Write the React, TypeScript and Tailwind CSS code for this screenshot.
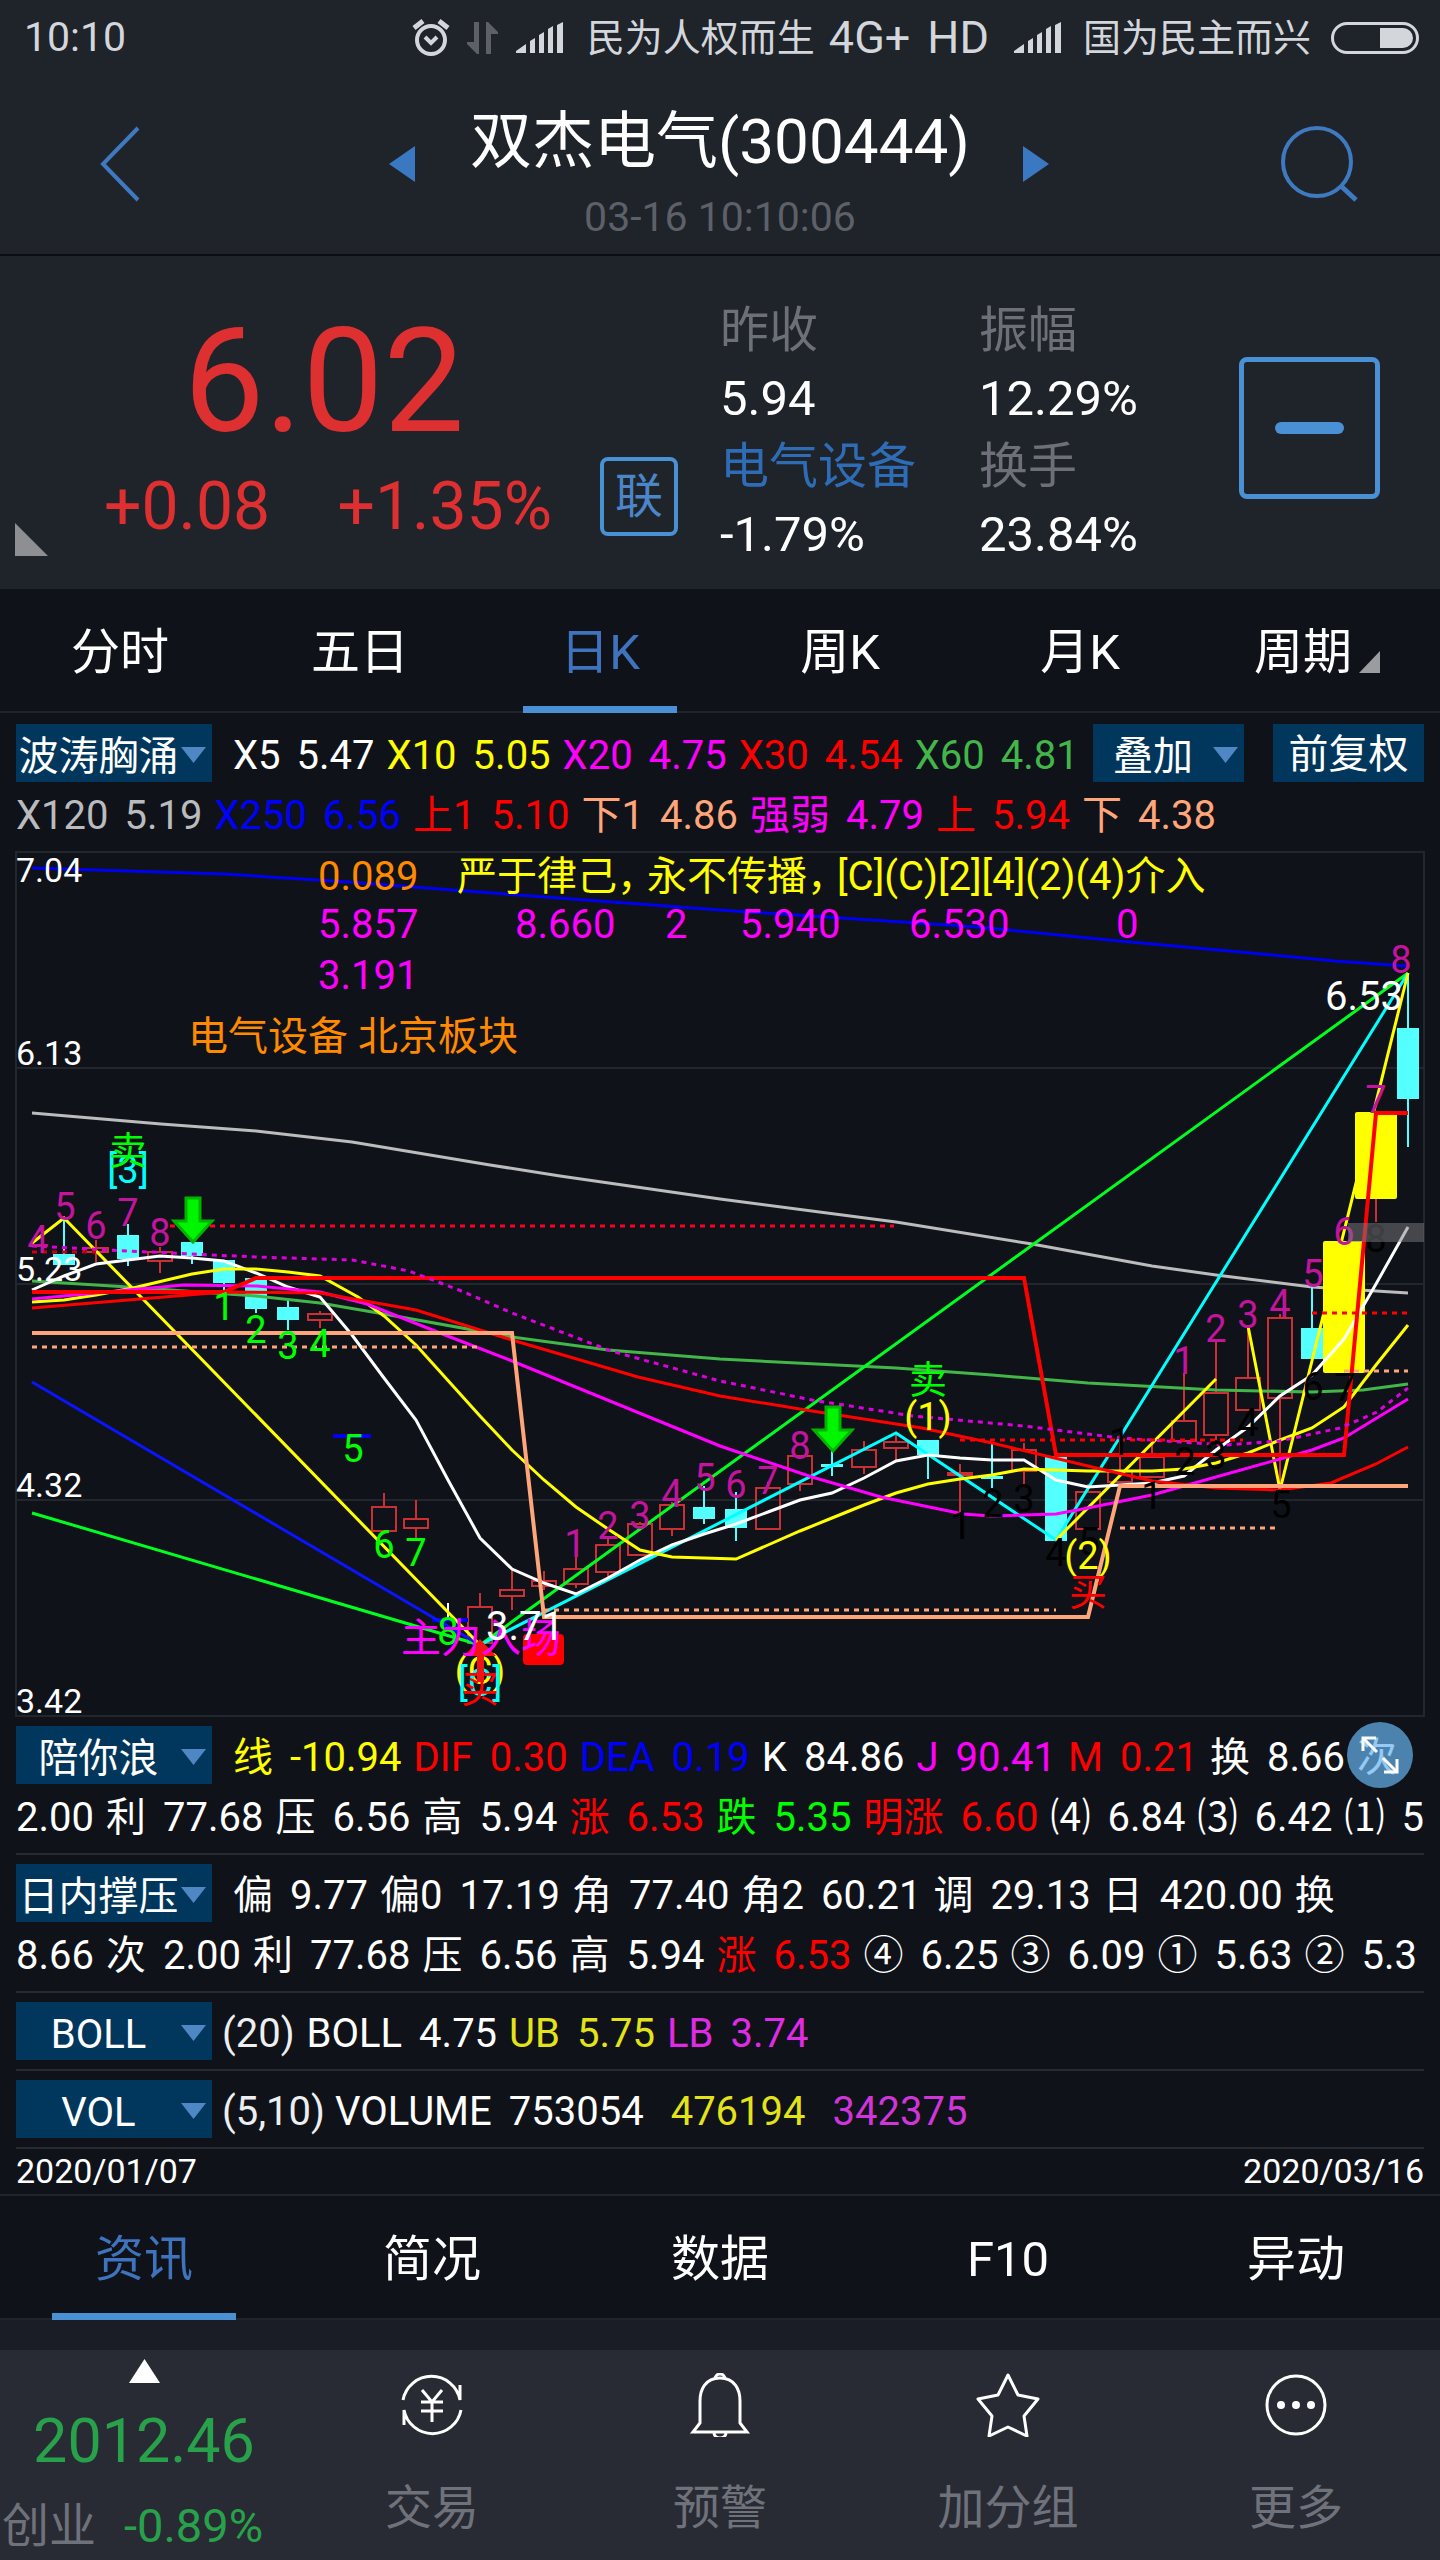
import type { ReactNode } from "react";

type Reading = { name?: string; value?: string; color?: string };
type Point = [number, number];

const periods = ["分时", "五日", "日K", "周K", "月K", "周期"];
const sections = ["资讯", "简况", "数据", "F10", "异动"];

const maTop: Reading[] = [
  { name: "X5", value: "5.47" },
  { name: "X10", value: "5.05", color: "text-[#ffff00]" },
  { name: "X20", value: "4.75", color: "text-[#ff00ff]" },
  { name: "X30", value: "4.54", color: "text-[#ff0000]" },
  { name: "X60", value: "4.81", color: "text-[#43b649]" },
];

const maBottom: Reading[] = [
  { name: "X120", value: "5.19", color: "text-[#b9bbbe]" },
  { name: "X250", value: "6.56", color: "text-[#0000ff]" },
  { name: "上1", value: "5.10", color: "text-[#ff0000]" },
  { name: "下1", value: "4.86", color: "text-[#ffa57a]" },
  { name: "强弱", value: "4.79", color: "text-[#ff00ff]" },
  { name: "上", value: "5.94", color: "text-[#ff0000]" },
  { name: "下", value: "4.38", color: "text-[#ffa57a]" },
];

const waveTop: Reading[] = [
  { name: "线", value: "-10.94", color: "text-[#ffff00]" },
  { name: "DIF", value: "0.30", color: "text-[#ff0000]" },
  { name: "DEA", value: "0.19", color: "text-[#0000ff]" },
  { name: "K", value: "84.86" },
  { name: "J", value: "90.41", color: "text-[#ff00ff]" },
  { name: "M", value: "0.21", color: "text-[#ff0000]" },
  { name: "换", value: "8.66" },
  { name: "次" },
];

const waveBottom: Reading[] = [
  { value: "2.00" },
  { name: "利", value: "77.68" },
  { name: "压", value: "6.56" },
  { name: "高", value: "5.94" },
  { name: "涨", value: "6.53", color: "text-[#ff0000]" },
  { name: "跌", value: "5.35", color: "text-[#00ff00]" },
  { name: "明涨", value: "6.60", color: "text-[#ff0000]" },
  { name: "⑷", value: "6.84" },
  { name: "⑶", value: "6.42" },
  { name: "⑴", value: "5" },
];

const dayTop: Reading[] = [
  { name: "偏", value: "9.77" },
  { name: "偏0", value: "17.19" },
  { name: "角", value: "77.40" },
  { name: "角2", value: "60.21" },
  { name: "调", value: "29.13" },
  { name: "日", value: "420.00" },
  { name: "换" },
];

const dayBottom: Reading[] = [
  { value: "8.66" },
  { name: "次", value: "2.00" },
  { name: "利", value: "77.68" },
  { name: "压", value: "6.56" },
  { name: "高", value: "5.94" },
  { name: "涨", value: "6.53", color: "text-[#ff0000]" },
  { name: "④", value: "6.25" },
  { name: "③", value: "6.09" },
  { name: "①", value: "5.63" },
  { name: "②", value: "5.3" },
];

// [bar, up, high, top, bottom, low]
const candles: [number, boolean, number, number, number, number][] = [
  [1, false, 369, 404, 415, 415],
  [2, true, 390, 398, 402, 412],
  [3, false, 374, 385, 409, 416],
  [4, true, 397, 402, 411, 423],
  [5, false, 391, 392, 406, 414],
  [6, false, 410, 410, 433, 440],
  [7, false, 428, 428, 459, 463],
  [8, false, 450, 457, 470, 480],
  [9, true, 461, 464, 470, 478],
  [11, true, 643, 657, 681, 682],
  [12, true, 650, 669, 678, 689],
  [14, true, 743, 757, 793, 793],
  [15, true, 720, 740, 746, 760],
  [16, true, 721, 731, 736, 740],
  [17, true, 703, 719, 734, 738],
  [18, true, 687, 695, 722, 727],
  [19, true, 672, 674, 705, 705],
  [20, true, 652, 655, 679, 686],
  [21, false, 636, 657, 669, 674],
  [22, false, 642, 659, 678, 691],
  [23, true, 632, 638, 679, 679],
  [24, true, 605, 606, 634, 641],
  [25, false, 597, 614, 617, 626],
  [26, true, 591, 600, 617, 624],
  [27, true, 585, 592, 598, 611],
  [28, false, 590, 590, 605, 629],
  [29, true, 614, 623, 625, 664],
  [30, false, 594, 626, 629, 638],
  [31, true, 593, 600, 621, 634],
  [32, false, 606, 606, 691, 691],
  [33, true, 634, 642, 679, 679],
  [34, true, 589, 621, 632, 632],
  [35, true, 593, 607, 627, 627],
  [36, true, 523, 571, 591, 591],
  [37, true, 491, 543, 585, 590],
  [38, true, 476, 528, 560, 560],
  [39, true, 464, 468, 548, 632],
  [40, false, 436, 478, 509, 509],
  [43, false, 123, 178, 249, 297],
];

const ma5: Point[] = [
  [32, 440], [64, 426], [96, 414], [128, 410], [160, 406], [192, 408], [224, 411], [256, 423], [288, 437],
  [320, 447], [352, 485], [384, 528], [416, 570], [448, 630], [480, 688], [512, 719], [544, 733], [576, 744],
  [608, 728], [640, 710], [672, 695], [704, 684], [736, 674], [768, 662], [800, 650], [832, 643], [864, 628],
  [896, 611], [928, 605], [960, 608], [992, 610], [1024, 610], [1056, 630], [1088, 637], [1120, 635],
  [1152, 633], [1184, 626], [1216, 600], [1248, 577], [1280, 546], [1312, 525], [1344, 489], [1376, 434], [1408, 377],
];
const ma10: Point[] = [
  [32, 452], [64, 450], [96, 445], [133, 438], [192, 424], [224, 419], [256, 419], [288, 422], [320, 426],
  [358, 447], [384, 466], [416, 495], [480, 566], [512, 600], [544, 630], [576, 657], [608, 679], [640, 700],
  [672, 707], [736, 709], [768, 695], [800, 681], [832, 668], [864, 655], [896, 643], [928, 634], [960, 629],
  [992, 625], [1024, 619], [1088, 621], [1152, 621], [1184, 619], [1216, 613], [1248, 603], [1280, 590],
  [1312, 578], [1344, 557], [1376, 515], [1408, 475],
];
const ma20: Point[] = [
  [32, 449], [128, 440], [184, 435], [257, 436], [320, 442], [367, 454], [445, 485], [512, 511], [720, 596],
  [812, 627], [881, 647], [963, 664], [991, 666], [1056, 664], [1088, 658], [1152, 645], [1216, 627], [1280, 609],
  [1312, 600], [1344, 588], [1408, 549],
];
const ma30: Point[] = [
  [32, 458], [128, 450], [224, 442], [320, 443], [416, 460], [512, 490], [638, 527], [720, 546], [812, 561],
  [922, 578], [992, 593], [1088, 616], [1152, 631], [1216, 638], [1280, 640], [1331, 633], [1376, 614], [1408, 597],
];
const ma60: Point[] = [
  [32, 431], [128, 437], [256, 446], [320, 453], [384, 464], [512, 487], [608, 500], [720, 509], [896, 518],
  [992, 525], [1088, 533], [1216, 540], [1312, 542], [1363, 540], [1408, 534],
];
const ma120: Point[] = [
  [32, 263], [161, 274], [256, 281], [352, 292], [490, 315], [560, 326], [720, 349], [896, 372], [1032, 394],
  [1152, 416], [1216, 425], [1312, 437], [1408, 443],
];
const ma250: Point[] = [
  [32, 18], [224, 24], [349, 32], [479, 42], [720, 60], [977, 77], [1119, 91], [1262, 104], [1335, 111], [1406, 116],
];
const strength: Point[] = [
  [32, 396], [128, 401], [256, 407], [352, 410], [409, 421], [459, 440], [512, 463], [611, 501], [720, 531],
  [812, 550], [913, 566], [1024, 576], [1120, 588], [1225, 595], [1280, 591], [1340, 578], [1377, 562], [1408, 538],
];
const upper: Point[] = [
  [32, 442], [224, 442], [256, 428], [1024, 428], [1056, 605], [1344, 605], [1376, 263], [1408, 263],
];
const lower: Point[] = [
  [32, 483], [512, 483], [544, 767], [1088, 767], [1120, 636], [1408, 636],
];

// [digit, x, baseline]
const purpleCounts: [string, number, number][] = [
  ["4", 38, 403], ["5", 65, 370], ["6", 96, 389], ["7", 128, 376], ["8", 160, 396],
  ["1", 575, 707], ["2", 608, 689], ["3", 640, 679], ["4", 672, 657], ["5", 705, 641],
  ["6", 736, 648], ["7", 768, 644], ["8", 800, 609],
  ["1", 1184, 524], ["2", 1216, 492], ["3", 1248, 478], ["4", 1280, 467], ["5", 1313, 437],
  ["6", 1344, 395], ["7", 1376, 263], ["8", 1401, 123],
];
const greenCounts: [string, number, number][] = [
  ["1", 224, 470], ["2", 256, 493], ["3", 288, 509], ["4", 320, 507],
  ["5", 353, 612], ["6", 384, 708], ["7", 416, 716], ["8", 448, 795],
];
const blackCounts: [string, number, number][] = [
  ["1", 961, 689], ["2", 993, 667], ["3", 1024, 662], ["4", 1056, 716], ["5", 1089, 705],
  ["1", 1120, 605], ["1", 1152, 659], ["2", 1185, 625], ["3", 1216, 619], ["4", 1248, 586],
  ["5", 1281, 668], ["6", 1313, 550], ["7", 1345, 551], ["8", 1376, 402],
];

const path = (pts: Point[]) => pts.map((p) => p.join(",")).join(" ");
const barX = (i: number) => 32 * (i + 1);

function Line({ pts, color, width = 3, dash }: { pts: Point[]; color: string; width?: number; dash?: string }) {
  return <polyline points={path(pts)} fill="none" stroke={color} strokeWidth={width} strokeDasharray={dash} />;
}

function Counts({ items, color }: { items: [string, number, number][]; color: string }) {
  return (
    <g fill={color} fontSize="38" textAnchor="middle">
      {items.map(([d, x, y]) => (
        <text key={`${x}-${y}`} x={x} y={y}>{d}</text>
      ))}
    </g>
  );
}

function SellArrow({ x, y }: { x: number; y: number }) {
  return (
    <path
      d={`M${x - 7} ${y}h14v23h12l-19 21l-19 -21h12z`}
      fill="#00f600"
      stroke="#00b400"
      strokeWidth="3"
    />
  );
}

function KLineChart() {
  return (
    <svg viewBox="0 0 1440 868" className="block h-auto w-full overflow-visible" role="img" aria-label="日K线">
      <g stroke="#22262d" strokeWidth="2" fill="none">
        <rect x="16" y="2" width="1408" height="864" />
        <path d="M16 218H1424M16 434H1424M16 650H1424" />
      </g>

      <Line pts={ma250} color="#0000f0" />
      <Line pts={ma120} color="#bcbcbc" />

      {candles.map(([i, up, high, top, bottom, low]) => {
        const x = barX(i);
        return up ? (
          <g key={i} stroke="#c93035" strokeWidth="2" fill="none">
            <path d={`M${x} ${high}V${top}M${x} ${bottom}V${low}`} />
            <rect x={x - 12} y={top} width="24" height={bottom - top} />
          </g>
        ) : (
          <g key={i} fill="#54ffff">
            <rect x={x - 1} y={high} width="2" height={low - high} />
            <rect x={x - 11} y={top} width="22" height={bottom - top} />
          </g>
        );
      })}
      <path d="M448 753V772" stroke="#fff" strokeWidth="2" />
      <path d="M333 586H371M432 770H468" stroke="#0000f0" strokeWidth="4" />
      <path d="M1376 348V372" stroke="#c93035" strokeWidth="2" />

      <Line pts={ma60} color="#43b649" />
      <Line pts={[[32, 663], [480, 795], [1408, 123]]} color="#00ff21" />
      <Line pts={[[32, 532], [480, 795]]} color="#0a14ff" />
      <Line pts={[[480, 795], [896, 583], [1056, 690], [1408, 123]]} color="#00ffff" />
      <Line pts={[[32, 393], [64, 368], [480, 795]]} color="#ffff00" />
      <Line pts={[[1056, 690], [1216, 529]]} color="#ffff00" />
      <Line pts={[[1248, 476], [1280, 640], [1408, 123]]} color="#ffff00" />

      <rect x="1323" y="391" width="42" height="132" rx="2" fill="#ffff00" />
      <rect x="1355" y="262" width="42" height="87" rx="2" fill="#ffff00" />

      <Line pts={ma5} color="#fff" />
      <Line pts={ma10} color="#ffff00" />
      <Line pts={ma20} color="#ff00ff" />
      <Line pts={ma30} color="#ff0000" />
      <Line pts={upper} color="#ff0000" width={4} />
      <Line pts={lower} color="#ffa57a" width={4} />

      <Line pts={strength} color="#dc00dc" dash="5 5" />
      <Line pts={[[170, 376], [894, 376]]} color="#ff0020" dash="5 5" />
      <Line pts={[[32, 402], [96, 402]]} color="#c80014" dash="5 5" />
      <Line pts={[[960, 590], [1243, 590]]} color="#ff0000" dash="5 5" />
      <Line pts={[[1312, 463], [1408, 463]]} color="#ff0000" dash="5 5" />
      <Line pts={[[32, 497], [480, 497]]} color="#ffa57a" dash="5 5" />
      <Line pts={[[544, 760], [1056, 760]]} color="#ffa57a" dash="5 5" />
      <Line pts={[[1120, 678], [1280, 678]]} color="#ffa57a" dash="5 5" />
      <Line pts={[[1344, 521], [1408, 521]]} color="#ffa57a" dash="5 5" />

      <Counts items={purpleCounts} color="#c2149c" />
      <Counts items={greenCounts} color="#00ff00" />
      <Counts items={blackCounts} color="#000" />

      <rect x="1348" y="373" width="76" height="19" fill="#7b7b80" fillOpacity="0.5" />

      <SellArrow x={193} y={348} />
      <SellArrow x={833} y={557} />

      {/* 价格刻度 */}
      <g fill="#fff" fontSize="34">
        <text x="16" y="32">7.04</text>
        <text x="16" y="215">6.13</text>
        <text x="16" y="431">5.23</text>
        <text x="16" y="647">4.32</text>
        <text x="16" y="863">3.42</text>
      </g>

      <g fontSize="40">
        <text x="318" y="40" fill="#ff8a00">0.089</text>
        <text y="40" fill="#ffff00">
          <tspan x="457">严于律己，</tspan>
          <tspan x="647">永不传播，</tspan>
          <tspan x="837">[C](C)[2][4](2)(4)介入</tspan>
        </text>
        <g fill="#ff00ff">
          <text x="318" y="88">5.857</text>
          <text x="515" y="88">8.660</text>
          <text x="665" y="88">2</text>
          <text x="740" y="88">5.940</text>
          <text x="909" y="88">6.530</text>
          <text x="1116" y="88">0</text>
          <text x="318" y="139">3.191</text>
        </g>
        <text x="188" y="200" fill="#ff8a00">电气设备 北京板块</text>
        <text x="1325" y="160" fill="#fff">6.53</text>
      </g>

      <g fontSize="38" textAnchor="middle">
        <text x="128" y="333" fill="#00ffff">[3]</text>
        <text x="128" y="314" fill="#00ff00">卖</text>
        <text x="928" y="543" fill="#00ff00">卖</text>
        <text x="928" y="580" fill="#ffff00">(1)</text>
        <text x="1088" y="719" fill="#ffff00">(2)</text>
        <text x="1088" y="755" fill="#ff0000">买</text>
        <text x="480" y="834" fill="#ffff00">(C)</text>
        <text x="480" y="846" fill="#00ffff">[C]</text>
        <text x="480" y="852" fill="#ff0000">买</text>
      </g>
      <path d="M477 832V806H464L480 789L496 806H484V832z" fill="#f01414" />

      <rect x="523" y="784" width="41" height="31" rx="4" fill="#ff0000" />
      <text x="401" y="802" fontSize="40" fill="#ff00ff">主力入场</text>
      <text x="486" y="790" fontSize="40" fill="#fff">3.71</text>
    </svg>
  );
}

function Readings({ items, tight }: { items: Reading[]; tight?: boolean }) {
  return (
    <div className="flex min-w-0 gap-[12px] overflow-hidden whitespace-nowrap text-white">
      {items.map((r, i) => (
        <span key={i} className={`flex shrink-0 ${tight ? "gap-[16px]" : "gap-[17px]"} ${r.color ?? ""}`}>
          {r.name && <span>{r.name}</span>}
          {r.value && <span>{r.value}</span>}
        </span>
      ))}
    </div>
  );
}

function Picker({ label, value, className }: { label: string; value: string; className: string }) {
  return (
    <span className={`relative block h-[58px] shrink-0 bg-[#01375c] ${className}`}>
      <select
        aria-label={label}
        className="h-full w-full appearance-none pt-[4px] pr-[31px] text-center text-[40px] text-white [text-align-last:center]"
      >
        <option>{value}</option>
      </select>
      <svg viewBox="0 0 25 16" className="pointer-events-none absolute top-[23px] right-[6px] w-[25px]">
        <path d="M0 0H25L12.5 16z" fill="#4f87c4" />
      </svg>
    </span>
  );
}

function Panel({ name, first, children, second }: { name: string; first?: boolean; children: ReactNode; second?: ReactNode }) {
  return (
    <section className={`relative mx-4 border-b-2 border-[#262a32] ${first ? "pt-[8px]" : "pt-[9px]"} ${second ? "pb-[1px]" : "pb-[9px]"}`}>
      <div className="flex h-[58px] items-center leading-[58px]">
        <Picker label="指标" value={name} className="w-[196px]" />
        <div className="pt-[6px]">{children}</div>
      </div>
      {second && <div className="leading-[68px]">{second}</div>}
    </section>
  );
}

function Signal() {
  return (
    <svg viewBox="0 0 47 31" className="w-[47px]" fill="currentColor">
      <path d="M0 31v-2l10-7v9zM14 31V19l5-3v15zM23 31V13l5-3v21zM32 31V7l5-3v27zM41 31V3l6-3v31z" />
    </svg>
  );
}

function StatusBar() {
  return (
    <div className="flex h-[75px] items-center pr-[21px] pl-[24px] text-[45px] leading-none text-[#d3d6db]">
      <span className="text-[41px]">10:10</span>
      <svg viewBox="0 0 38 37" className="ml-auto w-[38px]" fill="none" stroke="currentColor" strokeWidth="4">
        <circle cx="19" cy="21" r="14" />
        <path d="M2 9l9-7M36 9l-9-7" strokeWidth="5" />
        <path d="M13 18l6 6l6-6" />
      </svg>
      <svg viewBox="0 0 31 32" className="ml-[17px] w-[31px]" fill="#5d6067">
        <path d="M7 0h5v32h-2L0 22v-2h7zM19 32h5V12h7v-2L21 0h-2z" />
      </svg>
      <span className="ml-[18px]"><Signal /></span>
      <span className="ml-[24px] text-[38px]">民为人权而生</span>
      <span className="ml-[14px]">4G+</span>
      <span className="mr-[25px] ml-[17px]">HD</span>
      <Signal />
      <span className="mr-[20px] ml-[22px] text-[38px]">国为民主而兴</span>
      <span className="flex h-[32px] w-[88px] justify-end rounded-full border-3 border-current p-[3px]">
        <span className="w-[33px] rounded-r-full bg-current" />
      </span>
    </div>
  );
}

function Header() {
  return (
    <header className="grid h-[181px] grid-cols-[1fr_500px_1fr] items-center border-b-2 border-[#0b0d11]">
      <div className="flex items-center justify-between pr-[55px] pb-[2px] pl-[100px]">
        <button aria-label="返回">
          <svg viewBox="0 0 40 76" className="w-[40px]" fill="none" stroke="#3f79bf" strokeWidth="4">
            <path d="M38 2L3 38L38 74" />
          </svg>
        </button>
        <button aria-label="上一只">
          <svg viewBox="0 0 26 36" className="w-[26px]" fill="#3b78c2"><path d="M26 0V36L0 18z" /></svg>
        </button>
      </div>
      <div className="pt-[14px] text-center">
        <h1 className="text-[62px] leading-[80px] whitespace-nowrap text-white">双杰电气(300444)</h1>
        <p className="mt-[10px] text-[41px] leading-[50px] text-[#5d6069]">03-16 10:10:06</p>
      </div>
      <div className="flex items-center justify-between pr-[82px] pb-[2px] pl-[53px]">
        <button aria-label="下一只">
          <svg viewBox="0 0 26 36" className="w-[26px]" fill="#3b78c2"><path d="M0 0V36L26 18z" /></svg>
        </button>
        <button aria-label="搜索">
          <svg viewBox="0 0 77 76" className="w-[77px]" fill="none" stroke="#3f79bf" strokeWidth="4">
            <circle cx="36" cy="36" r="34" />
            <path d="M60 60L75 74" strokeWidth="5" />
          </svg>
        </button>
      </div>
    </header>
  );
}

function Quote() {
  return (
    <section className="flex h-[333px] items-start">
      <svg viewBox="0 0 33 33" className="mb-[33px] ml-[15px] w-[33px] self-end" fill="#8d8f93"><path d="M0 0V33H33z" /></svg>
      <div className="ml-[56px] w-[448px] pt-[54px] text-[#df3031]">
        <p className="pr-[8px] text-center text-[144px] leading-[144px]">6.02</p>
        <p className="mt-[20px] flex justify-between text-[66px] leading-[66px]">
          <span>+0.08</span>
          <span>+1.35%</span>
        </p>
      </div>
      <button className="mb-[53px] ml-[48px] h-[79px] w-[78px] self-end rounded-lg border-4 border-[#4a90d4] text-[48px] leading-none text-[#4a86c8]">
        联
      </button>
      <dl className="ml-[42px] grid grid-cols-[259px_auto] pt-[41px] text-[49px] leading-[68px] text-white">
        <div>
          <dt className="text-[#6d7078]">昨收</dt>
          <dd>5.94</dd>
          <dt className="text-[#2f6cb6]">电气设备</dt>
          <dd>-1.79%</dd>
        </div>
        <div>
          <dt className="text-[#6d7078]">振幅</dt>
          <dd>12.29%</dd>
          <dt className="text-[#6d7078]">换手</dt>
          <dd>23.84%</dd>
        </div>
      </dl>
      <button
        aria-label="删除自选"
        className="mt-[101px] mr-[60px] ml-auto flex h-[142px] w-[141px] items-center justify-center rounded-lg border-5 border-[#4a90d4]"
      >
        <span className="h-[12px] w-[69px] rounded-full bg-[#4a90d4]" />
      </button>
    </section>
  );
}

function BottomBar() {
  const actions = [
    {
      label: "交易",
      icon: (
        <>
          <path d="M3 27A29 29 0 0 1 60 27V12M61 37A29 29 0 0 1 4 37V52" />
          <path d="M22 17L32 29L42 17M32 29V49M21 29H43M21 38H43" />
        </>
      ),
    },
    {
      label: "预警",
      icon: (
        <>
          <path d="M27 6a5 5 0 0 1 10 0M32 5C17 5 12 17 12 28V50L5 59H59L52 50V28C52 17 47 5 32 5z" />
          <path d="M26 60a6 5 0 0 0 12 0" />
        </>
      ),
    },
    {
      label: "加分组",
      icon: <path d="M32 2L42 22L62 26L48 43L51 63L32 54L13 63L16 43L2 26L22 22z" strokeLinejoin="round" />,
    },
    {
      label: "更多",
      icon: (
        <>
          <circle cx="32" cy="32" r="29" />
          <g fill="currentColor" stroke="none">
            <circle cx="17" cy="32" r="4" />
            <circle cx="32" cy="32" r="4" />
            <circle cx="47" cy="32" r="4" />
          </g>
        </>
      ),
    },
  ];

  return (
    <footer className="grid h-[210px] grid-cols-5 bg-[#282b34]">
      <button className="flex flex-col items-center pt-[9px] text-[#28a24a]">
        <svg viewBox="0 0 31 24" className="w-[31px]" fill="#fff"><path d="M15.5 0L31 24H0z" /></svg>
        <span className="mt-[28px] text-[61px] leading-[60px]">2012.46</span>
        <span className="mt-[30px] flex gap-[28px] self-start pl-[2px] text-[47px] leading-[50px] whitespace-nowrap">
          <span className="text-[#6f727b]">创业</span>
          <span>-0.89%</span>
        </span>
      </button>
      {actions.map((a) => (
        <button key={a.label} className="flex flex-col items-center pt-[23px] text-white">
          <svg viewBox="0 0 64 64" className="w-[64px]" fill="none" stroke="currentColor" strokeWidth="3">{a.icon}</svg>
          <span className="mt-[46px] text-[47px] leading-[50px] text-[#6f727b]">{a.label}</span>
        </button>
      ))}
    </footer>
  );
}

export default function App() {
  return (
    <div className="bg-[#0f1219] font-['Roboto','Noto_Sans_CJK_SC',sans-serif]">
      <div className="bg-[#1f232a]">
        <StatusBar />
        <Header />
        <Quote />
      </div>

      <nav className="grid grid-cols-6 border-b-2 border-[#20242b] text-[49px] text-white">
        {periods.map((p) => (
          <button
            key={p}
            className={
              p === "日K"
                ? "relative h-[122px] pt-[6px] text-[#3f73bd] after:absolute after:-bottom-[2px] after:left-1/2 after:h-[7px] after:w-[154px] after:-translate-x-1/2 after:bg-[#4a90d4]"
                : "flex h-[122px] items-center justify-center gap-[7px] pt-[6px]"
            }
          >
            {p}
            {p === "周期" && (
              <svg viewBox="0 0 21 22" className="mt-[18px] mr-[6px] w-[21px]" fill="#9a9c9f"><path d="M21 0V22H0z" /></svg>
            )}
          </button>
        ))}
      </nav>

      <main className="text-[40px]">
        <div className="flex h-[69px] items-center px-4 pt-[11px] leading-[58px]">
          <Picker label="主图指标" value="波涛胸涌" className="mr-[21px] w-[196px]" />
          <div className="pt-[6px]"><Readings items={maTop} tight /></div>
          <Picker label="叠加" value="叠加" className="ml-auto w-[151px]" />
          <button className="ml-[29px] h-[58px] w-[151px] shrink-0 bg-[#01375c] pt-[4px] leading-[54px] text-white">前复权</button>
        </div>
        <div className="px-4 leading-[68px]">
          <Readings items={maBottom} tight />
        </div>

        <KLineChart />

        <Panel name="陪你浪" first second={<Readings items={waveBottom} />}>
          <div className="ml-[21px]"><Readings items={waveTop} /></div>
          <button
            aria-label="全屏"
            className="absolute top-[4px] right-[11px] flex size-[66px] items-center justify-center rounded-full bg-[#66b4ee]/70"
          >
            <svg viewBox="0 0 40 40" className="w-[40px]" fill="none" stroke="#fff" strokeWidth="3">
              <path d="M3 16V3H16M37 24V37H24" />
              <path d="M3 3L17 17M23 23L37 37" />
            </svg>
          </button>
        </Panel>
        <Panel name="日内撑压" second={<Readings items={dayBottom} />}>
          <div className="ml-[21px]"><Readings items={dayTop} /></div>
        </Panel>
        <Panel name="BOLL">
          <div className="ml-[10px] flex gap-[12px] text-[#eceef0]">
            <span>(20)</span>
            <Readings
              items={[
                { name: "BOLL", value: "4.75" },
                { name: "UB", value: "5.75", color: "text-[#e3e31a]" },
                { name: "LB", value: "3.74", color: "text-[#e02be6]" },
              ]}
            />
          </div>
        </Panel>
        <Panel name="VOL">
          <div className="ml-[10px] flex gap-[27px] text-[#eceef0]">
            <span className="flex gap-[10px]">
              <span>(5,10)</span>
              <Readings items={[{ name: "VOLUME", value: "753054" }]} />
            </span>
            <span className="text-[#e3e31a]">476194</span>
            <span className="text-[#cf35d8]">342375</span>
          </div>
        </Panel>
        <div className="flex h-[47px] justify-between border-b-2 border-[#20242b] px-4 text-[34px] leading-[44px] text-white">
          <time>2020/01/07</time>
          <time>2020/03/16</time>
        </div>
      </main>

      <nav className="grid grid-cols-5 border-b-2 border-[#20242b] text-[49px] text-white">
        {sections.map((s) => (
          <button
            key={s}
            className={
              s === "资讯"
                ? "relative h-[122px] pt-[6px] text-[#3f73bd] after:absolute after:-bottom-[2px] after:left-1/2 after:h-[7px] after:w-[184px] after:-translate-x-1/2 after:bg-[#4a90d4]"
                : "h-[122px] pt-[6px]"
            }
          >
            {s}
          </button>
        ))}
      </nav>
      <div className="h-[30px] bg-[#1a1d26]" />
      <BottomBar />
    </div>
  );
}
